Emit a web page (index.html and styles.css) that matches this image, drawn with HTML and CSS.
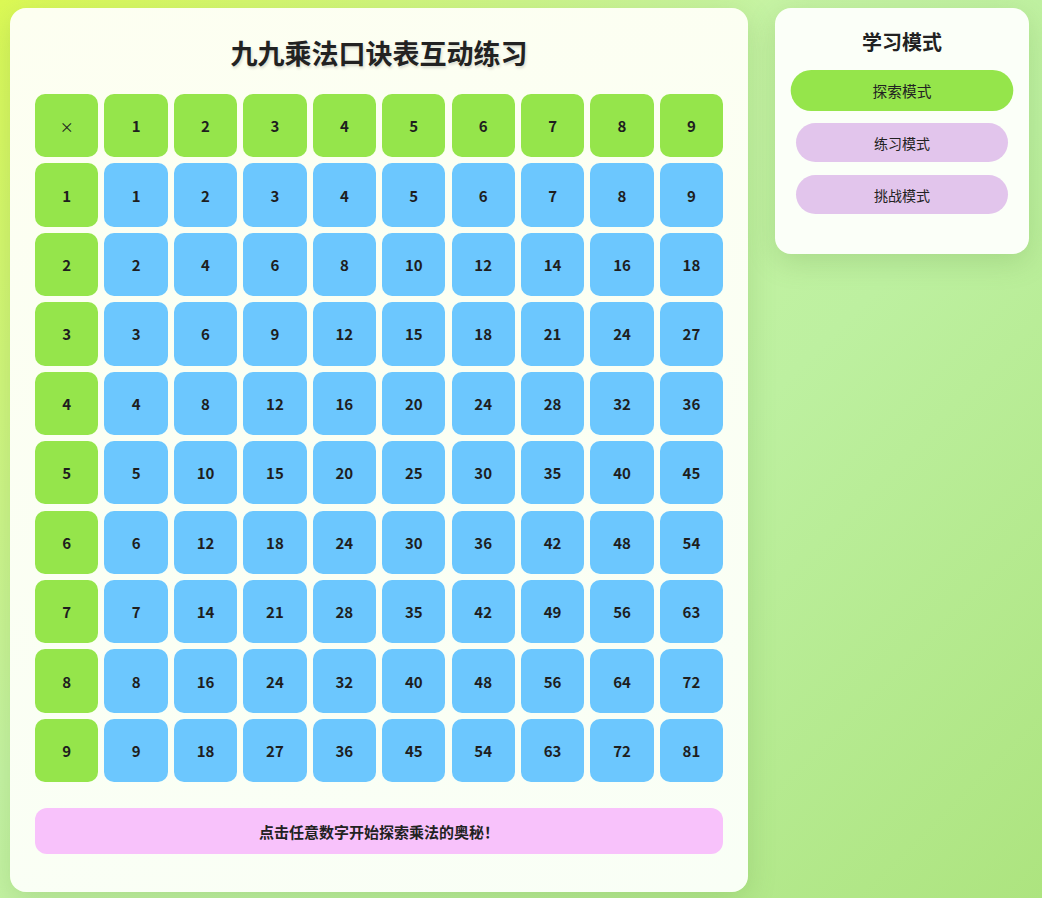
FILE: index.html
```html
<!DOCTYPE html>
<html lang="zh-CN">
<head>
<meta charset="utf-8">
<title>九九乘法口诀表互动练习</title>
<link rel="stylesheet" href="styles.css">
</head>
<body>
<div class="page">
  <main class="card main-card">
    <h1 class="title">九九乘法口诀表互动练习</h1>
    <div class="grid">
      <div class="cell head corner">×</div>
      <div class="cell head">1</div><div class="cell head">2</div><div class="cell head">3</div><div class="cell head">4</div><div class="cell head">5</div><div class="cell head">6</div><div class="cell head">7</div><div class="cell head">8</div><div class="cell head">9</div>

      <div class="cell head">1</div><div class="cell num">1</div><div class="cell num">2</div><div class="cell num">3</div><div class="cell num">4</div><div class="cell num">5</div><div class="cell num">6</div><div class="cell num">7</div><div class="cell num">8</div><div class="cell num">9</div>

      <div class="cell head">2</div><div class="cell num">2</div><div class="cell num">4</div><div class="cell num">6</div><div class="cell num">8</div><div class="cell num">10</div><div class="cell num">12</div><div class="cell num">14</div><div class="cell num">16</div><div class="cell num">18</div>

      <div class="cell head">3</div><div class="cell num">3</div><div class="cell num">6</div><div class="cell num">9</div><div class="cell num">12</div><div class="cell num">15</div><div class="cell num">18</div><div class="cell num">21</div><div class="cell num">24</div><div class="cell num">27</div>

      <div class="cell head">4</div><div class="cell num">4</div><div class="cell num">8</div><div class="cell num">12</div><div class="cell num">16</div><div class="cell num">20</div><div class="cell num">24</div><div class="cell num">28</div><div class="cell num">32</div><div class="cell num">36</div>

      <div class="cell head">5</div><div class="cell num">5</div><div class="cell num">10</div><div class="cell num">15</div><div class="cell num">20</div><div class="cell num">25</div><div class="cell num">30</div><div class="cell num">35</div><div class="cell num">40</div><div class="cell num">45</div>

      <div class="cell head">6</div><div class="cell num">6</div><div class="cell num">12</div><div class="cell num">18</div><div class="cell num">24</div><div class="cell num">30</div><div class="cell num">36</div><div class="cell num">42</div><div class="cell num">48</div><div class="cell num">54</div>

      <div class="cell head">7</div><div class="cell num">7</div><div class="cell num">14</div><div class="cell num">21</div><div class="cell num">28</div><div class="cell num">35</div><div class="cell num">42</div><div class="cell num">49</div><div class="cell num">56</div><div class="cell num">63</div>

      <div class="cell head">8</div><div class="cell num">8</div><div class="cell num">16</div><div class="cell num">24</div><div class="cell num">32</div><div class="cell num">40</div><div class="cell num">48</div><div class="cell num">56</div><div class="cell num">64</div><div class="cell num">72</div>

      <div class="cell head">9</div><div class="cell num">9</div><div class="cell num">18</div><div class="cell num">27</div><div class="cell num">36</div><div class="cell num">45</div><div class="cell num">54</div><div class="cell num">63</div><div class="cell num">72</div><div class="cell num">81</div>
    </div>
    <div class="message">点击任意数字开始探索乘法的奥秘！</div>
  </main>
  <aside class="card side-card">
    <h2 class="side-title">学习模式</h2>
    <button class="mode-btn active">探索模式</button>
    <button class="mode-btn">练习模式</button>
    <button class="mode-btn">挑战模式</button>
  </aside>
</div>
</body>
</html>
```

FILE: styles.css
```css
* { box-sizing: border-box; }

html, body {
  margin: 0;
  padding: 0;
}

body {
  min-height: 898px;
  font-family: "Noto Sans CJK SC", "Noto Sans", sans-serif;
  color: #222;
  background: linear-gradient(135deg, #dcf955 0%, #c6f3a4 40%, #bdf0a0 60%, #ade47f 100%);
}

.page {
  display: flex;
  align-items: flex-start;
  gap: 27px;
  padding: 8px 10px;
}

.card {
  border-radius: 16px;
  box-shadow: 0 8px 28px rgba(90, 140, 60, 0.22);
}

.main-card {
  width: 738px;
  padding: 25px 25px 38px;
  background: linear-gradient(160deg, #fdfff1 0%, #f9fff6 100%);
}

.title {
  margin: 0 0 22px;
  font-size: 27px;
  line-height: 39px;
  font-weight: 700;
  text-align: center;
  color: #222;
  text-shadow: 1px 2px 3px rgba(0, 0, 0, 0.15);
}

.grid {
  display: grid;
  grid-template-columns: repeat(10, 1fr);
  gap: 6.1px;
}

.cell {
  aspect-ratio: 1 / 1;
  border-radius: 10px;
  display: flex;
  align-items: center;
  justify-content: center;
  font-size: 15px;
  font-weight: 700;
  color: #1e1e1e;
}

.head { background: #95e54b; }
.num { background: #6cc7fe; }

.corner {
  font-weight: 400;
  font-size: 14px;
}

.message {
  margin-top: 26px;
  height: 46px;
  border-radius: 12px;
  background: #f8c2fb;
  display: flex;
  align-items: center;
  justify-content: center;
  font-size: 15px;
  font-weight: 700;
  color: #222;
}

.side-card {
  width: 254px;
  padding: 20px 21px 27px;
  background: #fbfff8;
  display: flex;
  flex-direction: column;
}

.side-title {
  margin: 0 0 15px;
  font-size: 20px;
  line-height: 28px;
  font-weight: 700;
  text-align: center;
  color: #222;
}

.mode-btn {
  height: 39px;
  margin: 0 0 13px;
  border: none;
  border-radius: 20px;
  background: #e2c5ec;
  font-family: "Noto Sans CJK SC", "Noto Sans", sans-serif;
  font-size: 14px;
  color: #222;
  cursor: pointer;
}

.mode-btn.active {
  background: #95e54b;
  transform: scale(1.05);
}
```
